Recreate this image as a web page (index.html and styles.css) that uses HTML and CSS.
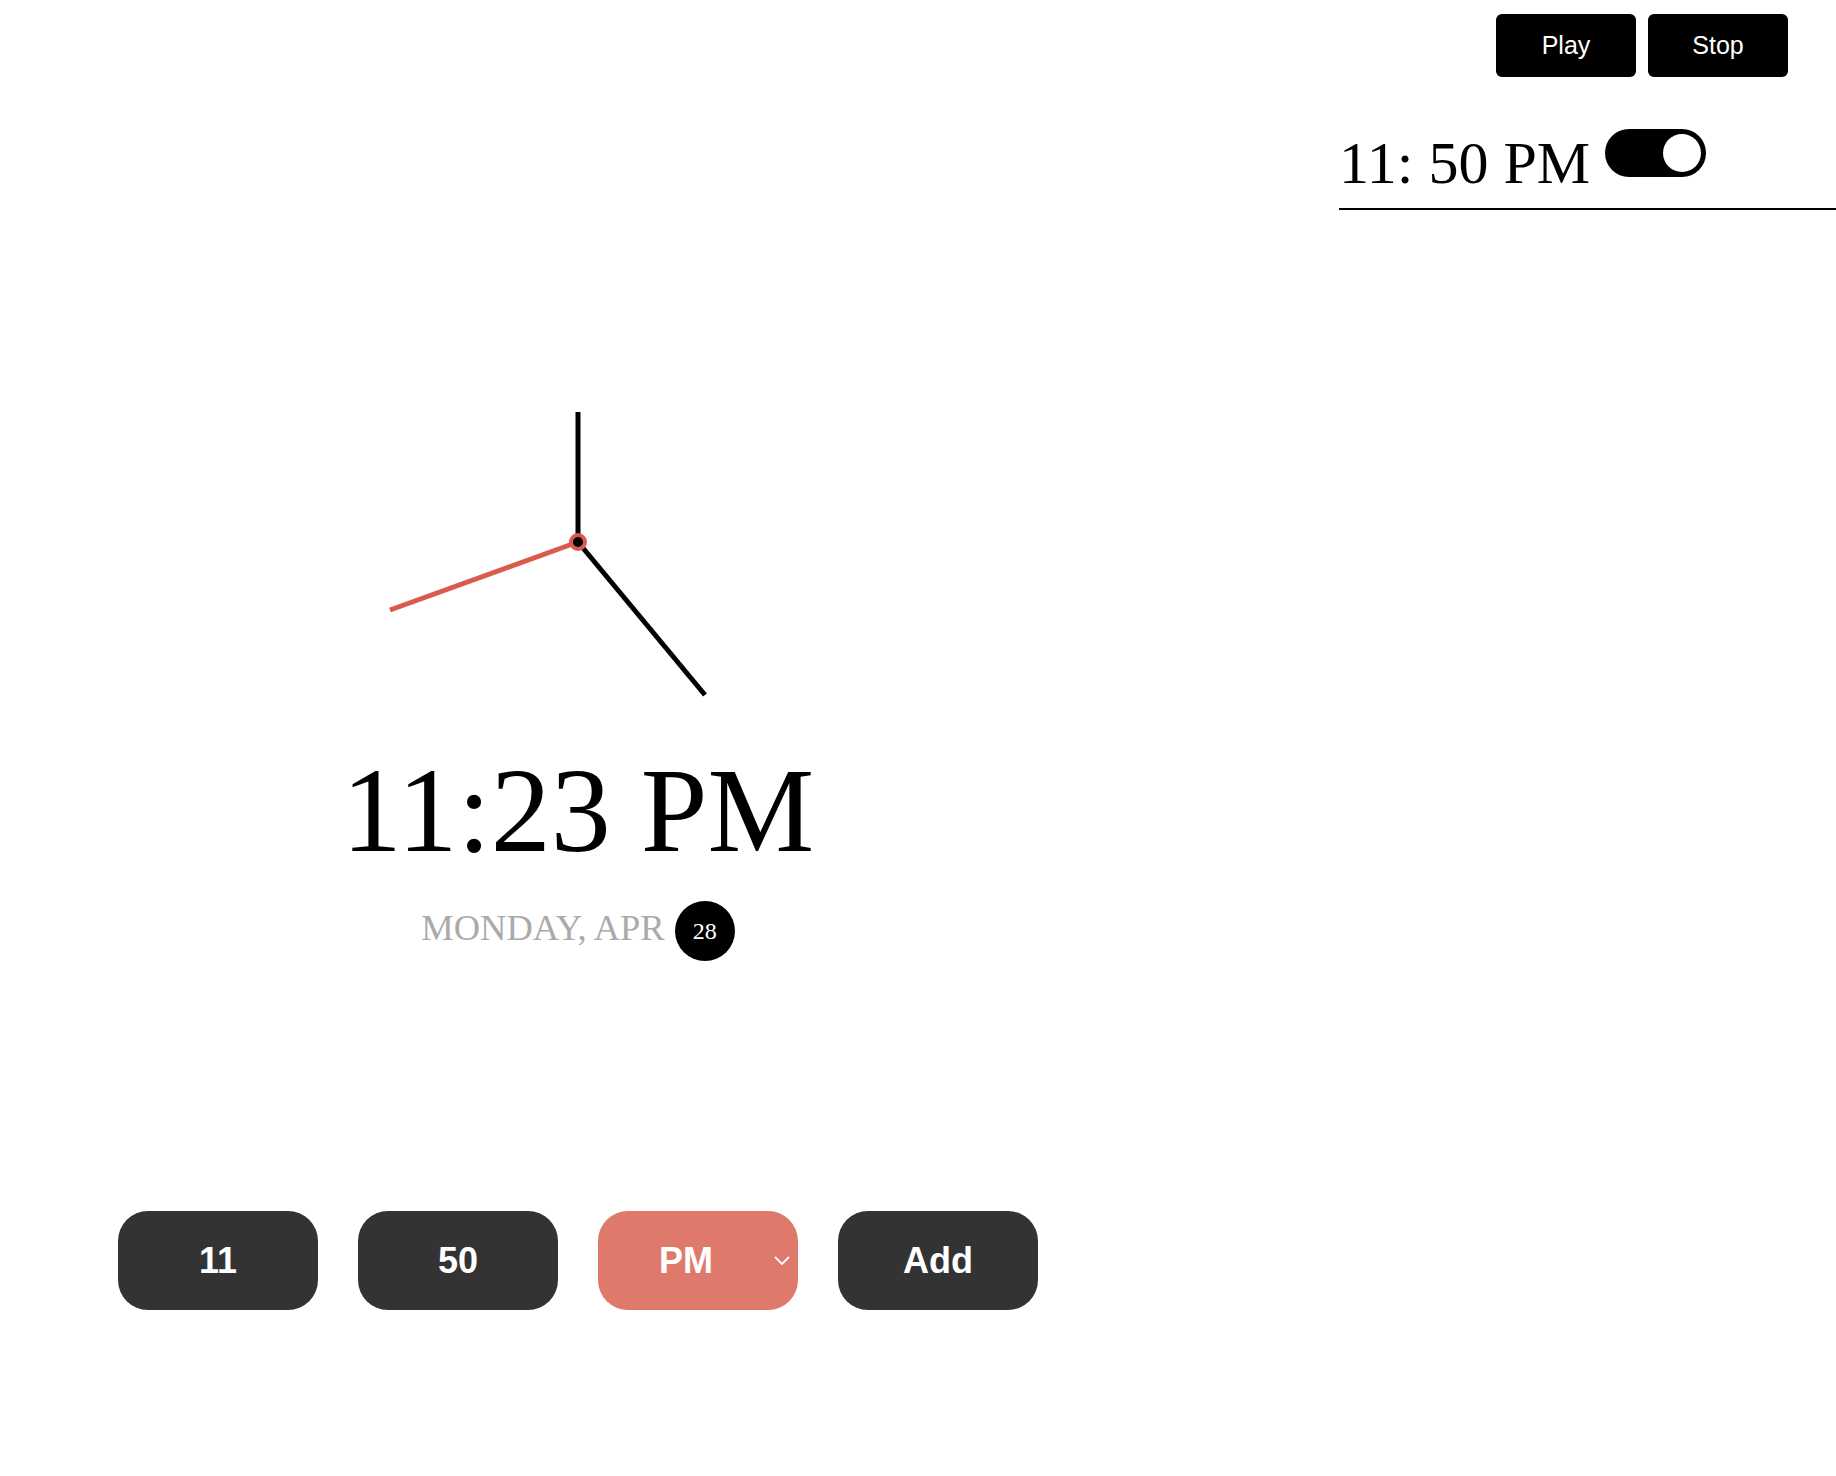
FILE: index.html
```html
<!DOCTYPE html>
<html lang="en">
<head>
<meta charset="utf-8">
<title>Clock</title>
<link rel="stylesheet" href="styles.css">
</head>
<body>
<header class="topbar">
  <button class="media-btn">Play</button>
  <button class="media-btn">Stop</button>
</header>
<main class="layout">
  <section class="clock-col">
    <svg class="clock" width="400" height="400" viewBox="0 0 400 400">
      <line x1="200" y1="200" x2="200" y2="70" stroke="#000" stroke-width="5"/>
      <line x1="200" y1="200" x2="327" y2="353" stroke="#000" stroke-width="5"/>
      <line x1="200" y1="200" x2="12" y2="268" stroke="#d95b4b" stroke-width="5"/>
      <circle cx="200" cy="200" r="7" fill="#000" stroke="#d95b4b" stroke-width="4"/>
    </svg>
    <div class="time">11:23 PM</div>
    <div class="date">
      <span class="date-text">MONDAY, APR</span>
      <span class="day-badge">28</span>
    </div>
    <div class="controls">
      <div class="ctrl">11</div>
      <div class="ctrl">50</div>
      <div class="ctrl ctrl-select">
        <span class="ctrl-label">PM</span>
        <svg class="chev" width="16" height="9" viewBox="0 0 16 9"><polyline points="1,1 8,8 15,1" fill="none" stroke="#fff" stroke-width="1.8"/></svg>
      </div>
      <div class="ctrl">Add</div>
    </div>
  </section>
  <aside class="alarm">
    <span class="alarm-time">11: 50 PM</span>
    <span class="toggle"><span class="knob"></span></span>
  </aside>
</main>
</body>
</html>
```
FILE: styles.css
```css
html, body {
  margin: 0;
  padding: 0;
  background: #fff;
}
body {
  width: 1836px;
  font-family: "Liberation Serif", "Times New Roman", serif;
  color: #000;
}
.topbar {
  display: flex;
  justify-content: flex-end;
  gap: 12px;
  padding: 14px 48px 0 0;
}
.media-btn {
  width: 140px;
  height: 63px;
  border: 0;
  border-radius: 6px;
  background: #000;
  color: #fff;
  font-family: "Liberation Sans", Arial, sans-serif;
  font-size: 25px;
  padding: 0;
}
.layout {
  display: flex;
  align-items: flex-start;
}
.clock-col {
  flex: 0 0 1156px;
  display: flex;
  flex-direction: column;
  align-items: center;
  padding-top: 265px;
}
.clock {
  display: block;
}
.time {
  font-size: 120px;
  line-height: normal;
}
.date {
  display: flex;
  align-items: center;
  gap: 10px;
  margin-top: 21px;
}
.date-text {
  font-size: 36.5px;
  color: #aaaaaa;
  position: relative;
  top: -4px;
}
.day-badge {
  width: 60px;
  height: 60px;
  border-radius: 50%;
  background: #000;
  color: #fff;
  font-size: 24px;
  display: flex;
  align-items: center;
  justify-content: center;
}
.controls {
  align-self: stretch;
  display: flex;
  gap: 40px;
  padding-left: 118px;
  margin-top: 250px;
}
.ctrl {
  width: 200px;
  height: 99px;
  border-radius: 30px;
  background: #333333;
  color: #fff;
  font-family: "Liberation Sans", Arial, sans-serif;
  font-weight: bold;
  font-size: 36px;
  display: flex;
  align-items: center;
  justify-content: center;
}
.ctrl-select {
  background: #df796b;
  justify-content: flex-start;
  padding-right: 8px;
  box-sizing: border-box;
}
.ctrl-label {
  flex: 1;
  text-align: center;
}
.chev {
  display: block;
  flex: 0 0 16px;
}
.alarm {
  margin-left: auto;
  width: 497px;
  margin-top: 52px;
  display: flex;
  align-items: flex-start;
  gap: 15px;
  padding-bottom: 10px;
  border-bottom: 2px solid #000;
}
.alarm-time {
  font-size: 60px;
  line-height: normal;
}
.toggle {
  width: 101px;
  height: 48px;
  border-radius: 24px;
  background: #000;
  box-sizing: border-box;
  padding: 5px 5px;
  display: flex;
  justify-content: flex-end;
  align-items: center;
}
.knob {
  width: 38px;
  height: 38px;
  border-radius: 50%;
  background: #fff;
}
```
